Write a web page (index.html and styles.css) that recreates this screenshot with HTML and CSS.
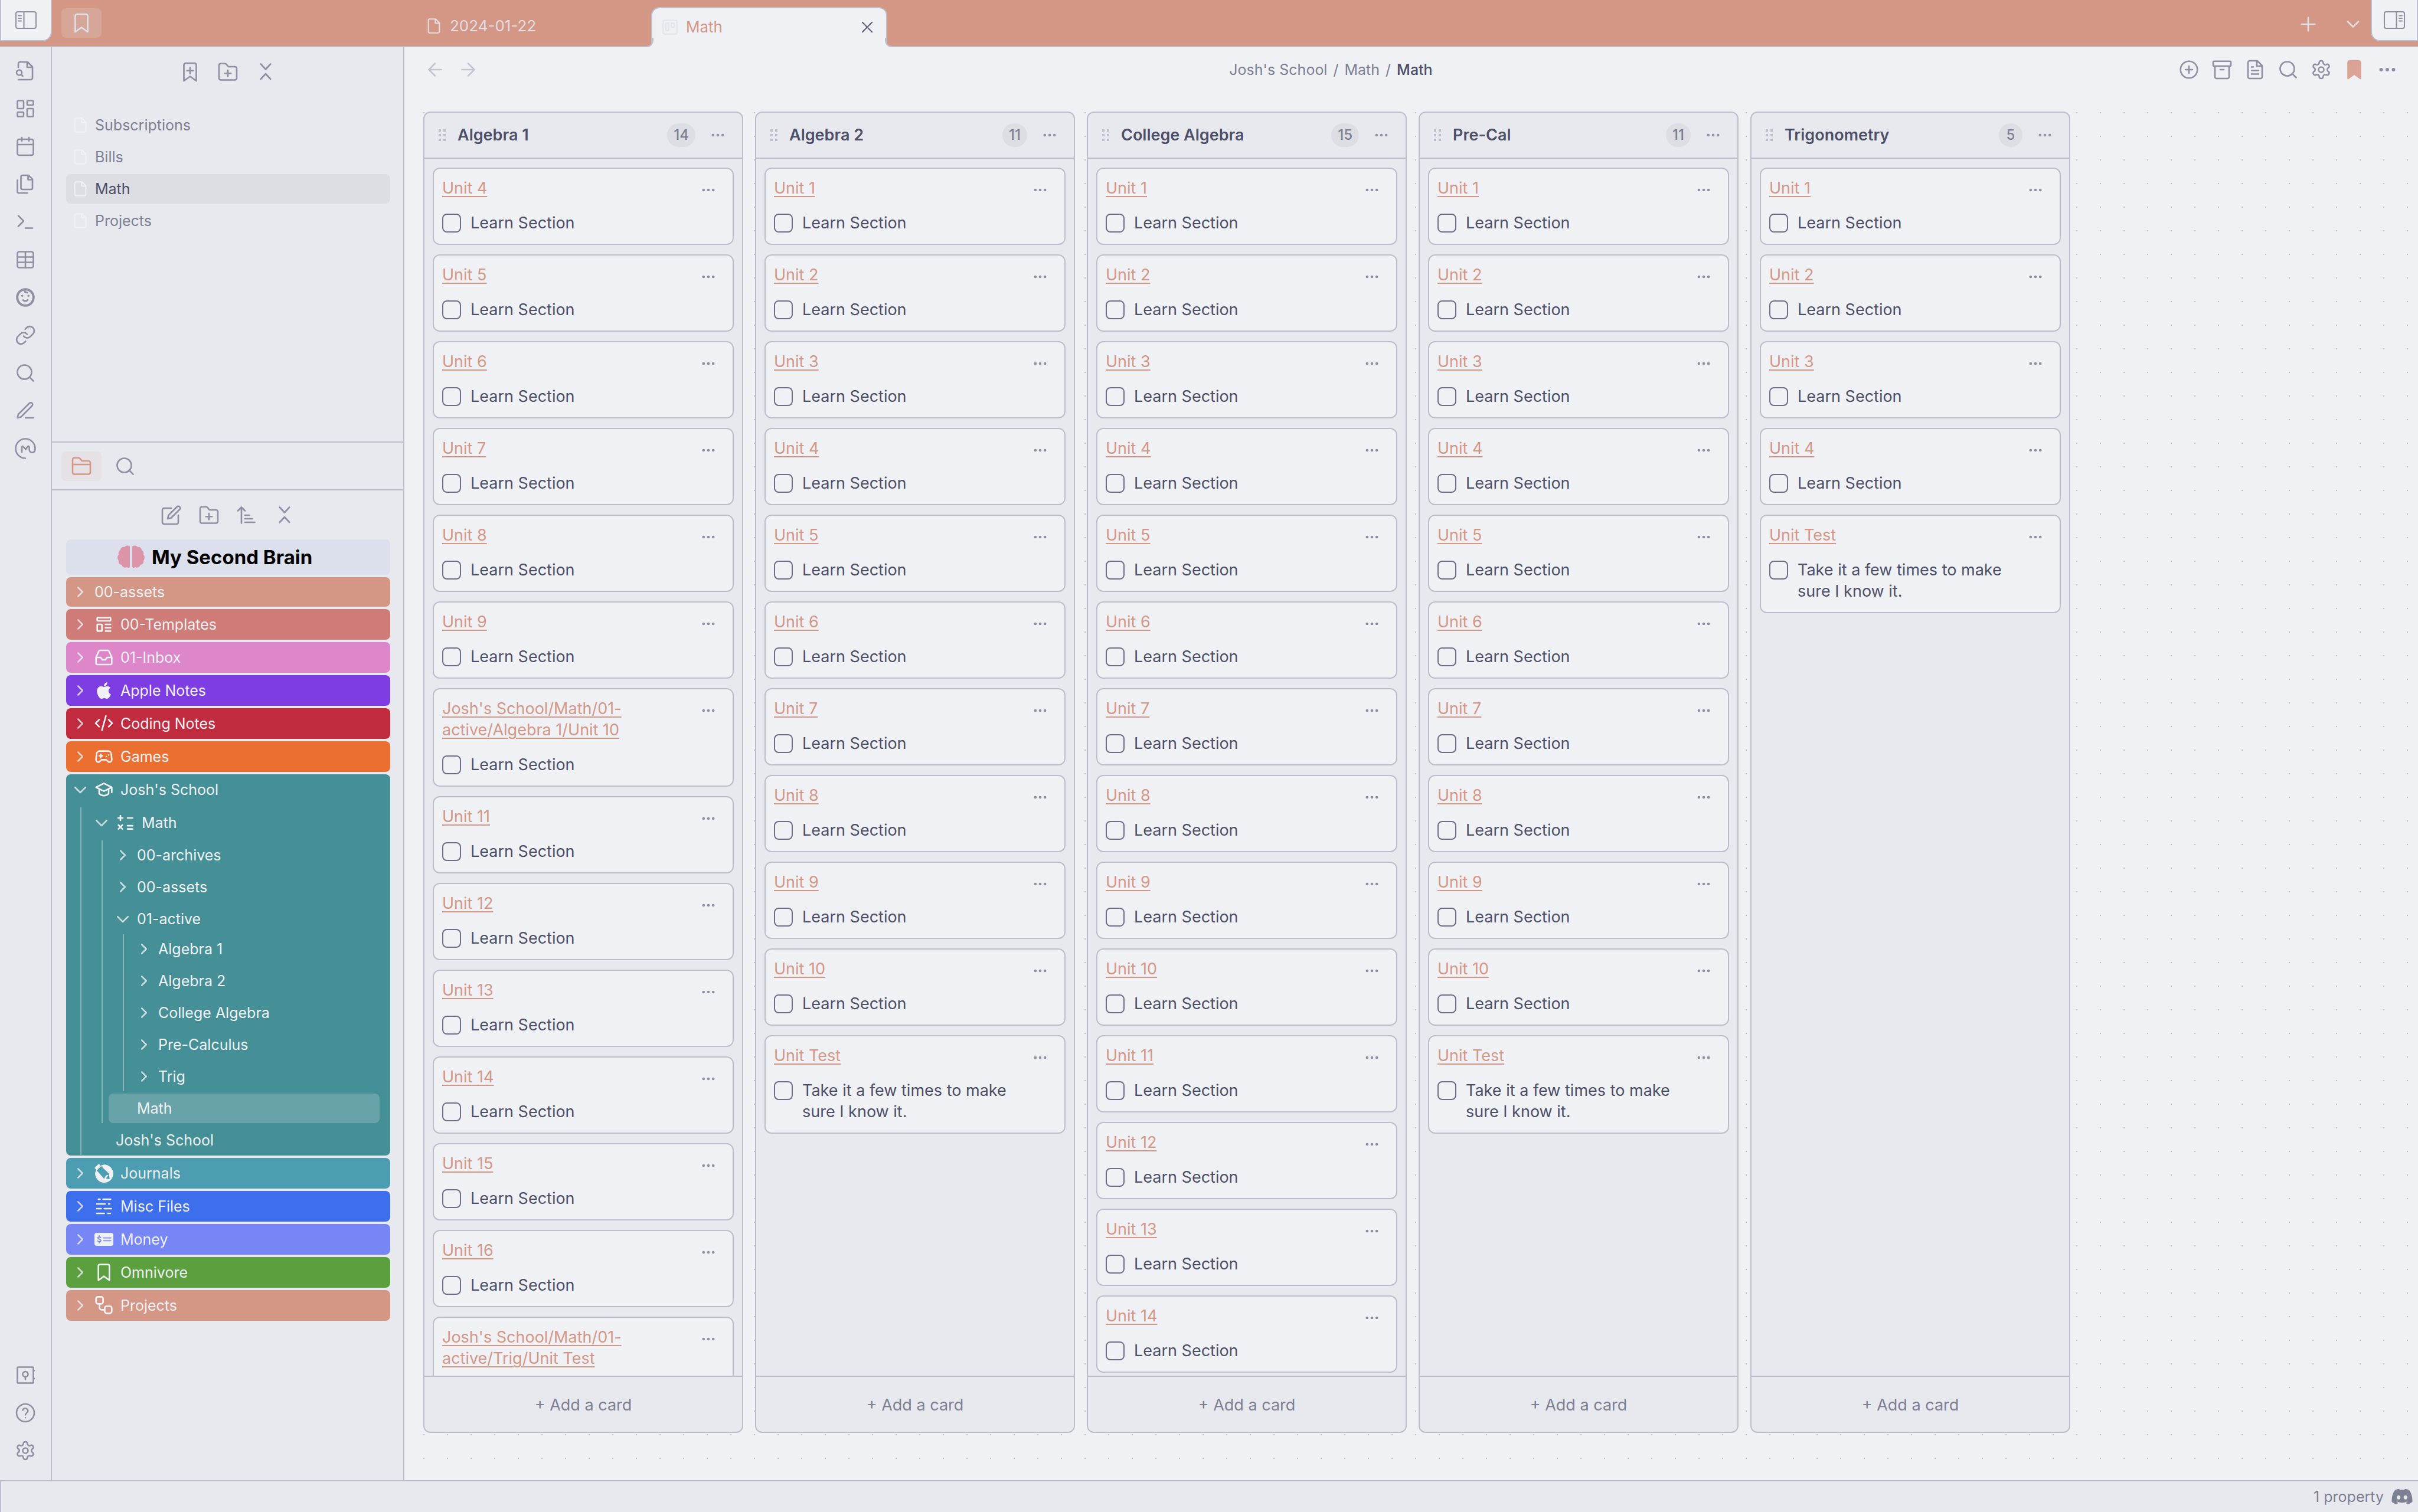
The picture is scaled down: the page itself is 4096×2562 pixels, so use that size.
FILE: index.html
```html
<!DOCTYPE html>
<html lang="en">
<head>
<meta charset="utf-8">
<title>Math</title>
<link rel="stylesheet" href="styles.css">
</head>
<body>
<svg class="sprite" aria-hidden="true">
  <symbol id="panel-left" viewBox="0 0 36 32"><rect x="1" y="2" width="34" height="28" rx="3"/><path d="M14.500 2v28M5 8.500h5M5 13h5M5 17.500h5"/></symbol>
  <symbol id="panel-right" viewBox="0 0 36 32"><rect x="1" y="2" width="34" height="28" rx="3"/><path d="M21.500 2v28M26 8.500h5M26 13h5M26 17.500h5"/></symbol>
  <symbol id="bookmark" viewBox="0 0 24 24"><path d="m19 22-7-5-7 5V4a2 2 0 0 1 2-2h10a2 2 0 0 1 2 2z"/></symbol>
  <symbol id="bookmark-plus" viewBox="0 0 24 24"><path d="m19 22-7-5-7 5V4a2 2 0 0 1 2-2h10a2 2 0 0 1 2 2zM12 7v7M15.500 10.500h-7"/></symbol>
  <symbol id="folder-plus" viewBox="0 0 24 24"><path d="M4 21h16a2 2 0 0 0 2-2V8a2 2 0 0 0-2-2h-7.500L10.300 3.300A2 2 0 0 0 8.700 2.500H4a2 2 0 0 0-2 2V19a2 2 0 0 0 2 2zM12 10v7M8.500 13.500h7"/></symbol>
  <symbol id="folder" viewBox="0 0 24 24"><path d="M4 21h16a2 2 0 0 0 2-2V8a2 2 0 0 0-2-2h-7.500L10.300 3.300A2 2 0 0 0 8.700 2.500H4a2 2 0 0 0-2 2V19a2 2 0 0 0 2 2zM2 10h20"/></symbol>
  <symbol id="collapse" viewBox="0 0 24 24"><path d="m6.500 20 5.500-6 5.500 6M6.500 3l5.500 6 5.500-6"/></symbol>
  <symbol id="sort" viewBox="0 0 24 24"><path d="m2 7 4-4 4 4M6 3v18M10 12h5M10 16h8M10 20h11"/></symbol>
  <symbol id="compose" viewBox="0 0 24 24"><path d="M12 4H4a2 2 0 0 0-2 2v14a2 2 0 0 0 2 2h14a2 2 0 0 0 2-2v-8M18.500 2.500a2.100 2.100 0 0 1 3 3L12 15l-4 1 1-4z"/></symbol>
  <symbol id="file" viewBox="0 0 24 24"><path d="M14.500 2H6a2 2 0 0 0-2 2v16a2 2 0 0 0 2 2h12a2 2 0 0 0 2-2V7.500zM14 2v6h6"/></symbol>
  <symbol id="file-text" viewBox="0 0 24 24"><path d="M14.500 2H6a2 2 0 0 0-2 2v16a2 2 0 0 0 2 2h12a2 2 0 0 0 2-2V7.500zM14 2v6h6M16 13H8M16 17H8M10 9H8"/></symbol>
  <symbol id="kanban" viewBox="0 0 24 24"><rect x="2" y="2" width="20" height="20" rx="2"/><rect x="6" y="6" width="4" height="11"/><rect x="14" y="6" width="4" height="6"/></symbol>
  <symbol id="file-search" viewBox="0 0 24 24"><path d="M4 8V4a2 2 0 0 1 2-2h8.500L20 7.500V20a2 2 0 0 1-2 2H4M14 2v6h6M7.500 16.500 9 18"/><circle cx="5" cy="14" r="3"/></symbol>
  <symbol id="dashboard" viewBox="0 0 24 24"><rect x="3" y="3" width="7" height="9" rx="1"/><rect x="14" y="3" width="7" height="5" rx="1"/><rect x="14" y="12" width="7" height="9" rx="1"/><rect x="3" y="16" width="7" height="5" rx="1"/></symbol>
  <symbol id="calendar" viewBox="0 0 24 24"><rect x="3" y="4" width="18" height="18" rx="2"/><path d="M16 2v4M8 2v4M3 10h18"/></symbol>
  <symbol id="files" viewBox="0 0 24 24"><path d="M15.500 2H8.600a1.600 1.600 0 0 0-1.600 1.600v12.800A1.600 1.600 0 0 0 8.600 18h9.800a1.600 1.600 0 0 0 1.600-1.600V6.500zM15 2v5h5M3 7.600v12.800A1.600 1.600 0 0 0 4.600 22h9.800"/></symbol>
  <symbol id="terminal" viewBox="0 0 24 24"><path d="m4 17 6-6-6-6M12 19h8"/></symbol>
  <symbol id="table" viewBox="0 0 24 24"><rect x="3" y="3" width="18" height="18" rx="2"/><path d="M12 3v18M3 9h18M3 15h18"/></symbol>
  <symbol id="baby" viewBox="0 0 24 24"><circle cx="12" cy="12" r="9.200" stroke-width="2.600"/><path d="M9.500 15c1.500 1.200 3.500 1.200 5 0" stroke-width="2"/><path d="M11 3.500c0 2 1 3 3 3" stroke-width="2"/><path d="M8.500 10.200h.01M15.500 10.200h.01" stroke-width="2.400"/></symbol>
  <symbol id="link" viewBox="0 0 24 24"><path d="M10 13a5 5 0 0 0 7.540.540l3-3a5 5 0 0 0-7.070-7.070l-1.720 1.710M14 11a5 5 0 0 0-7.540-.540l-3 3a5 5 0 0 0 7.070 7.070l1.710-1.710"/></symbol>
  <symbol id="search" viewBox="0 0 24 24"><circle cx="11" cy="11" r="8"/><path d="m21 21-4.300-4.300"/></symbol>
  <symbol id="pencil" viewBox="0 0 24 24"><path d="M12 20h9M16.500 3.500a2.120 2.120 0 0 1 3 3L7 19l-4 1 1-4z"/></symbol>
  <symbol id="m-circle" viewBox="0 0 24 24"><path d="M12 23A11 11 0 1 1 23 12c0 3-1.500 4.500-3.400 4.500S16.400 15 16.400 13v-2.500c0-1.100-1.100-1.400-1.800-.6L12.300 13 9.700 9.900C9 9 8 9.400 8 10.500V16"/></symbol>
  <symbol id="vault" viewBox="0 0 24 24"><rect x="3" y="3" width="18" height="18" rx="1"/><circle cx="12" cy="11" r="3"/><path d="M12 14v3M22 7v.01M22 16v.01"/></symbol>
  <symbol id="help" viewBox="0 0 24 24"><circle cx="12" cy="12" r="10"/><path d="M9 9a3 3 0 0 1 5.830 1c0 2-2.830 2.700-2.830 4.200M12 17.500h.01"/></symbol>
  <symbol id="gear" viewBox="0 0 24 24"><path d="M12.220 2h-.44a2 2 0 0 0-2 2v.18a2 2 0 0 1-1 1.730l-.43.25a2 2 0 0 1-2 0l-.15-.08a2 2 0 0 0-2.730.73l-.22.38a2 2 0 0 0 .73 2.730l.15.1a2 2 0 0 1 1 1.720v.51a2 2 0 0 1-1 1.740l-.15.09a2 2 0 0 0-.73 2.730l.22.38a2 2 0 0 0 2.730.73l.15-.08a2 2 0 0 1 2 0l.43.25a2 2 0 0 1 1 1.730V20a2 2 0 0 0 2 2h.44a2 2 0 0 0 2-2v-.18a2 2 0 0 1 1-1.730l.43-.25a2 2 0 0 1 2 0l.15.08a2 2 0 0 0 2.730-.73l.22-.39a2 2 0 0 0-.73-2.730l-.15-.08a2 2 0 0 1-1-1.740v-.5a2 2 0 0 1 1-1.740l.15-.09a2 2 0 0 0 .73-2.730l-.22-.38a2 2 0 0 0-2.730-.73l-.15.08a2 2 0 0 1-2 0l-.43-.25a2 2 0 0 1-1-1.730V4a2 2 0 0 0-2-2z"/><circle cx="12" cy="12" r="3"/></symbol>
  <symbol id="plus" viewBox="0 0 24 24"><path d="M12 4.500v15M4.500 12h15"/></symbol>
  <symbol id="chevron-down" viewBox="0 0 24 24"><path d="m6 9 6 6 6-6"/></symbol>
  <symbol id="close" viewBox="0 0 24 24"><path d="M5 5l14 14M19 5 5 19"/></symbol>
  <symbol id="arrow-left" viewBox="0 0 24 24"><path d="m12 19-7-7 7-7M19 12H5"/></symbol>
  <symbol id="arrow-right" viewBox="0 0 24 24"><path d="m12 5 7 7-7 7M5 12h14"/></symbol>
  <symbol id="plus-circle" viewBox="0 0 24 24"><circle cx="12" cy="12" r="9.500"/><path d="M12 8v8M8 12h8"/></symbol>
  <symbol id="archive" viewBox="0 0 24 24"><rect x="2" y="2.500" width="20" height="5.500" rx="1"/><path d="M4 8v12a2 2 0 0 0 2 2h12a2 2 0 0 0 2-2V8M10 12h4"/></symbol>
  <symbol id="more" viewBox="0 0 24 24"><path d="M5 12h.01M12 12h.01M19 12h.01" stroke-width="4"/></symbol>
  <symbol id="fold" viewBox="4 4 16 16"><path d="m9 18 6-6-6-6"/></symbol>
  <symbol id="unfold" viewBox="4 4 16 16"><path d="m5 9 7 7 7-7"/></symbol>
  <symbol id="template" viewBox="0 0 24 24"><rect x="3.500" y="3.500" width="17" height="4" rx=".5"/><rect x="3.500" y="12" width="6" height="8.500" rx=".5"/><path d="M14 12h6.500M14 16.200h6.500M14 20.500h6.500"/></symbol>
  <symbol id="inbox" viewBox="0 0 24 24"><path d="M22 12h-6l-2 3h-4l-2-3H2M5.450 4.110 2 12v7a2 2 0 0 0 2 2h16a2 2 0 0 0 2-2v-7l-3.450-7.890A2 2 0 0 0 16.760 3H7.240a2 2 0 0 0-1.790 1.110z"/></symbol>
  <symbol id="apple" viewBox="-64 0 512 512"><path class="solid" d="M318.700 268.700c-.2-36.700 16.400-64.400 50-84.800-18.800-26.900-47.200-41.700-84.700-44.600-35.500-2.800-74.300 20.700-88.500 20.700-15 0-49.400-19.700-76.400-19.700C63.300 141.200 4 184.800 4 273.500q0 39.300 14.400 81.200c12.800 36.700 59 126.700 107.200 125.200 25.200-.6 43-17.900 75.800-17.900 31.800 0 48.300 17.900 76.400 17.900 48.600-.7 90.400-82.500 102.600-119.300-65.200-30.700-61.700-90-61.700-91.900zm-56.600-164.200c27.300-32.400 24.800-61.900 24-72.500-24.100 1.400-52 16.400-67.900 34.900-17.500 19.800-27.800 44.300-25.600 71.900 26.100 2 49.900-11.400 69.500-34.300z"/></symbol>
  <symbol id="code" viewBox="0 0 24 24"><path d="m18 16 4.500-4.500L18 7M6 7l-4.500 4.500L6 16M14.500 2.500l-5 18"/></symbol>
  <symbol id="gamepad" viewBox="0 0 24 24"><path d="M6 11h4M8 9v4M15 12h.01M18 10h.01M17.320 5H6.680a4 4 0 0 0-3.980 3.590C2.600 9.420 2 14.460 2 16a3 3 0 0 0 3 3c1 0 1.500-.5 2-1l1.410-1.410A2 2 0 0 1 9.830 16h4.340a2 2 0 0 1 1.410.590L17 18c.5.5 1 1 2 1a3 3 0 0 0 3-3c0-1.540-.6-6.580-.68-7.260A4 4 0 0 0 17.320 5z"/></symbol>
  <symbol id="school" viewBox="0 0 24 24"><path d="M22 9 12 4 2 9l10 5zV15.500M6 11.500V17c3 3.500 9 3.500 12 0v-5.500"/></symbol>
  <symbol id="math" viewBox="0 0 24 24"><path d="M3 6h6M6 3v6M15 6h6.500M3.500 15l5 5M8.500 15l-5 5M15 15.800h6.500M15 20h6.500"/></symbol>
  <symbol id="journal" viewBox="0 0 96 96"><path class="solid" d="M49 4a46 46 0 1 1-45 40L7 34 34 8z"/><path class="cut" d="M12 34 34 12l40 38 3 27-29-2z"/><path class="solid" d="M0 21 22 0l9 9-20 22zM50 78c1-10 7-20 16-22l6 4c-8 3-12 9-12 17z"/><path class="cut" d="m72 64 4 12-13-1z"/></symbol>
  <symbol id="logs" viewBox="0 0 24 24"><path d="M5 3h2M11 3h9.500M3 9h10.500M18 9h1.500M3 15h5.500M12.500 15h9M3 21h9.500M17 21h3" /></symbol>
  <symbol id="money" viewBox="0 0 96 66"><rect class="solid" width="96" height="66" rx="12"/><path class="dollar" d="M32 24c-3-4-15-4-15 2 0 8 16 5 16 13 0 7-12 7-17 2M24 14v6M24 45v6M46 26h38M46 40h38"/></symbol>
  <symbol id="workflow" viewBox="0 0 24 24"><rect x="2" y="1" width="9" height="9" rx="2.500"/><rect x="13" y="13" width="9" height="9" rx="2.500"/><path d="M6.500 10v5a2.500 2.500 0 0 0 2.500 2.500h4"/></symbol>
  <symbol id="brain" viewBox="0 0 46 40"><path class="solid" d="M21 2c-4-3-8-1-9 1-4-1-7 2-7 5-3 2-4 5-3 8-3 3-2 8 0 10-1 4 2 7 5 7 1 4 6 6 9 4 2 2 5 1 5-1zM25 2c4-3 8-1 9 1 4-1 7 2 7 5 3 2 4 5 3 8 3 3 2 8 0 10 1 4-2 7-5 7-1 4-6 6-9 4-2 2-5 1-5-1z"/></symbol>
  <symbol id="discord" viewBox="0 0 640 512"><path class="solid" d="M524.531,69.836a1.500,1.500,0,0,0-.764-.7A485.065,485.065,0,0,0,404.081,32.030a1.816,1.816,0,0,0-1.923.91,337.461,337.461,0,0,0-14.900,30.600,447.848,447.848,0,0,0-134.426,0,309.541,309.541,0,0,0-15.135-30.600,1.890,1.890,0,0,0-1.924-.91A483.689,483.689,0,0,0,116.085,69.137a1.712,1.712,0,0,0-.788.676C39.068,183.651,18.186,294.690,28.430,404.354a2.016,2.016,0,0,0,.765,1.375A487.666,487.666,0,0,0,176.020,479.918a1.900,1.900,0,0,0,2.063-.676A348.200,348.200,0,0,0,208.120,430.400a1.860,1.860,0,0,0-1.019-2.588,321.173,321.173,0,0,1-45.868-21.853,1.885,1.885,0,0,1-.185-3.126c3.082-2.309,6.166-4.711,9.109-7.137a1.819,1.819,0,0,1,1.900-.256c96.229,43.917,200.410,43.917,295.500,0a1.812,1.812,0,0,1,1.924.233c2.944,2.426,6.027,4.851,9.132,7.160a1.884,1.884,0,0,1-.162,3.126,301.407,301.407,0,0,1-45.890,21.830,1.875,1.875,0,0,0-1,2.611,391.055,391.055,0,0,0,30.014,48.815,1.864,1.864,0,0,0,2.063.7A486.048,486.048,0,0,0,610.700,405.729a1.882,1.882,0,0,0,.765-1.352C623.729,277.594,590.933,167.465,524.531,69.836ZM222.491,337.580c-28.972,0-52.844-26.587-52.844-59.239S193.056,219.100,222.491,219.100c29.665,0,53.306,26.820,52.843,59.239C275.334,310.993,251.924,337.580,222.491,337.580Zm195.380,0c-28.971,0-52.843-26.587-52.843-59.239S388.437,219.100,417.871,219.100c29.667,0,53.307,26.820,52.844,59.239C470.715,310.993,447.538,337.580,417.871,337.580Z"/></symbol>
</svg>

<div class="app">
  <header class="titlebar">
    <button class="toggle toggle-left" aria-label="Collapse left sidebar"><svg><use href="#panel-left"/></svg></button>
    <div class="titlebar-side">
      <button class="pane-tab on-accent" aria-label="Bookmarks"><svg class="icon"><use href="#bookmark"/></svg></button>
    </div>
    <nav class="tabs">
      <a class="tab" href="#"><svg class="icon small"><use href="#file"/></svg><span>2024-01-22</span></a>
      <div class="tab active"><svg class="icon small"><use href="#kanban"/></svg><a href="#">Math</a><button aria-label="Close"><svg class="icon small"><use href="#close"/></svg></button></div>
    </nav>
    <div class="titlebar-actions">
      <button aria-label="New tab"><svg class="icon"><use href="#plus"/></svg></button>
      <button aria-label="Tab list"><svg class="icon"><use href="#chevron-down"/></svg></button>
    </div>
    <button class="toggle toggle-right" aria-label="Expand right sidebar"><svg><use href="#panel-right"/></svg></button>
  </header>

  <div class="workspace">
    <nav class="ribbon">
      <button aria-label="Quick switcher"><svg class="icon"><use href="#file-search"/></svg></button>
      <button aria-label="Canvas"><svg class="icon"><use href="#dashboard"/></svg></button>
      <button aria-label="Daily note"><svg class="icon"><use href="#calendar"/></svg></button>
      <button aria-label="Templates"><svg class="icon"><use href="#files"/></svg></button>
      <button aria-label="Command palette"><svg class="icon"><use href="#terminal"/></svg></button>
      <button aria-label="Table"><svg class="icon"><use href="#table"/></svg></button>
      <button aria-label="Baby"><svg class="icon"><use href="#baby"/></svg></button>
      <button aria-label="Links"><svg class="icon"><use href="#link"/></svg></button>
      <button aria-label="Search"><svg class="icon"><use href="#search"/></svg></button>
      <button aria-label="Edit"><svg class="icon"><use href="#pencil"/></svg></button>
      <button aria-label="Sync"><svg class="icon"><use href="#m-circle"/></svg></button>
      <div class="ribbon-bottom">
        <button aria-label="Open another vault"><svg class="icon"><use href="#vault"/></svg></button>
        <button aria-label="Help"><svg class="icon"><use href="#help"/></svg></button>
        <button aria-label="Settings"><svg class="icon"><use href="#gear"/></svg></button>
      </div>
    </nav>

    <aside class="sidebar">
      <section class="pane bookmarks">
        <div class="pane-actions">
          <button aria-label="Bookmark active tab"><svg class="icon"><use href="#bookmark-plus"/></svg></button>
          <button aria-label="New group"><svg class="icon"><use href="#folder-plus"/></svg></button>
          <button aria-label="Collapse all"><svg class="icon"><use href="#collapse"/></svg></button>
        </div>
        <ul class="bookmark-list">
          <li><a href="#"><svg class="icon small"><use href="#file"/></svg>Subscriptions</a></li>
          <li><a href="#"><svg class="icon small"><use href="#file"/></svg>Bills</a></li>
          <li><a class="selected" href="#"><svg class="icon small"><use href="#file"/></svg>Math</a></li>
          <li><a href="#"><svg class="icon small"><use href="#file"/></svg>Projects</a></li>
        </ul>
      </section>
      <section class="pane explorer">
        <div class="pane-tabs">
          <button class="pane-tab current" aria-label="Files"><svg class="icon"><use href="#folder"/></svg></button>
          <button class="pane-tab" aria-label="Search"><svg class="icon"><use href="#search"/></svg></button>
        </div>
        <div class="pane-actions">
          <button aria-label="New note"><svg class="icon"><use href="#compose"/></svg></button>
          <button aria-label="New folder"><svg class="icon"><use href="#folder-plus"/></svg></button>
          <button aria-label="Sort order"><svg class="icon"><use href="#sort"/></svg></button>
          <button aria-label="Collapse all"><svg class="icon"><use href="#collapse"/></svg></button>
        </div>
        <div class="tree">
          <h2 class="vault-name"><svg class="brain"><use href="#brain"/></svg>My Second Brain</h2>
          <a class="row folder plain rosewater" href="#"><svg class="fold"><use href="#fold"/></svg>00-assets</a>
          <a class="row folder flamingo" href="#"><svg class="fold"><use href="#fold"/></svg><svg class="row-icon"><use href="#template"/></svg>00-Templates</a>
          <a class="row folder pink" href="#"><svg class="fold"><use href="#fold"/></svg><svg class="row-icon"><use href="#inbox"/></svg>01-Inbox</a>
          <a class="row folder mauve" href="#"><svg class="fold"><use href="#fold"/></svg><svg class="row-icon"><use href="#apple"/></svg>Apple Notes</a>
          <a class="row folder red" href="#"><svg class="fold"><use href="#fold"/></svg><svg class="row-icon"><use href="#code"/></svg>Coding Notes</a>
          <a class="row folder peach" href="#"><svg class="fold"><use href="#fold"/></svg><svg class="row-icon"><use href="#gamepad"/></svg>Games</a>
          <div class="open-folder teal">
            <a class="row folder" href="#"><svg class="fold"><use href="#unfold"/></svg><svg class="row-icon"><use href="#school"/></svg>Josh's School</a>
            <div class="children">
              <a class="row folder" href="#"><svg class="fold"><use href="#unfold"/></svg><svg class="row-icon"><use href="#math"/></svg>Math</a>
              <div class="children">
                <a class="row" href="#"><svg class="fold"><use href="#fold"/></svg>00-archives</a>
                <a class="row" href="#"><svg class="fold"><use href="#fold"/></svg>00-assets</a>
                <a class="row" href="#"><svg class="fold"><use href="#unfold"/></svg>01-active</a>
                <div class="children compact">
                  <a class="row" href="#"><svg class="fold"><use href="#fold"/></svg>Algebra 1</a>
                  <a class="row" href="#"><svg class="fold"><use href="#fold"/></svg>Algebra 2</a>
                  <a class="row" href="#"><svg class="fold"><use href="#fold"/></svg>College Algebra</a>
                  <a class="row" href="#"><svg class="fold"><use href="#fold"/></svg>Pre-Calculus</a>
                  <a class="row" href="#"><svg class="fold"><use href="#fold"/></svg>Trig</a>
                </div>
                <a class="row note selected" href="#">Math</a>
              </div>
              <a class="row note" href="#">Josh's School</a>
            </div>
          </div>
          <a class="row folder sapphire" href="#"><svg class="fold"><use href="#fold"/></svg><svg class="row-icon"><use href="#journal"/></svg>Journals</a>
          <a class="row folder blue" href="#"><svg class="fold"><use href="#fold"/></svg><svg class="row-icon"><use href="#logs"/></svg>Misc Files</a>
          <a class="row folder lavender" href="#"><svg class="fold"><use href="#fold"/></svg><svg class="row-icon"><use href="#money"/></svg>Money</a>
          <a class="row folder green" href="#"><svg class="fold"><use href="#fold"/></svg><svg class="row-icon"><use href="#bookmark"/></svg>Omnivore</a>
          <a class="row folder rosewater" href="#"><svg class="fold"><use href="#fold"/></svg><svg class="row-icon"><use href="#workflow"/></svg>Projects</a>
        </div>
      </section>
    </aside>

    <main class="view">
      <div class="view-header">
        <div class="view-actions history">
          <button aria-label="Back"><svg class="icon"><use href="#arrow-left"/></svg></button>
          <button aria-label="Forward"><svg class="icon"><use href="#arrow-right"/></svg></button>
        </div>
        <div class="breadcrumbs"><a href="#">Josh's School</a><span>/</span><a href="#">Math</a><span>/</span><strong>Math</strong></div>
        <div class="view-actions">
          <button aria-label="Add a list"><svg class="icon"><use href="#plus-circle"/></svg></button>
          <button aria-label="Archive completed cards"><svg class="icon"><use href="#archive"/></svg></button>
          <button aria-label="Open as markdown"><svg class="icon"><use href="#file-text"/></svg></button>
          <button aria-label="Search"><svg class="icon"><use href="#search"/></svg></button>
          <button aria-label="Board settings"><svg class="icon"><use href="#gear"/></svg></button>
          <button class="bookmarked" aria-label="Bookmark"><svg class="icon"><use href="#bookmark"/></svg></button>
          <button aria-label="More options"><svg class="icon"><use href="#more"/></svg></button>
        </div>
      </div>
      <div class="board" id="board"></div>
    </main>
  </div>

  <footer class="statusbar"><span>1 property</span><svg><use href="#discord"/></svg></footer>
</div>
<script src="board.js"></script>
</body>
</html>
```
FILE: board.js
```js
const learn = 'Learn Section';
const finalTask = 'Take it a few times to make sure I know it.';
const units = (from, to) =>
  Array.from({ length: to - from + 1 }, (_, i) => [`Unit ${from + i}`, learn]);

const lanes = [
  {
    title: 'Algebra 1',
    total: 14,
    cards: [
      ...units(4, 9),
      ["Josh's School/Math/01-active/Algebra 1/Unit 10", learn],
      ...units(11, 16),
      ["Josh's School/Math/01-active/Trig/Unit Test", ''],
    ],
  },
  { title: 'Algebra 2', total: 11, cards: [...units(1, 10), ['Unit Test', finalTask]] },
  { title: 'College Algebra', total: 15, cards: units(1, 14) },
  { title: 'Pre-Cal', total: 11, cards: [...units(1, 10), ['Unit Test', finalTask]] },
  { title: 'Trigonometry', total: 5, cards: [...units(1, 4), ['Unit Test', finalTask]] },
];

const more = '<svg class="icon"><use href="#more"/></svg>';

const taskHtml = (task) =>
  task ? `<label class="task"><input type="checkbox"><span>${task}</span></label>` : '';

const cardHtml = ([title, task]) => `
  <article class="card">
    <div class="card-head">
      <a href="#">${title}</a>
      <button aria-label="Card options">${more}</button>
    </div>
    ${taskHtml(task)}
  </article>`;

document.getElementById('board').innerHTML = lanes.map(({ title, total, cards }) => `
  <section class="lane">
    <header class="lane-head">
      <span class="grip"><i></i><i></i><i></i><i></i><i></i><i></i></span>
      <h3>${title}</h3>
      <span class="count">${total}</span>
      <button aria-label="List options">${more}</button>
    </header>
    <div class="cards">${cards.map(cardHtml).join('')}</div>
    <button class="add-card">+ Add a card</button>
  </section>`).join('');
```
FILE: styles.css
```css
:root {
  --base: #eff1f5;
  --mantle: #e7e9ee;
  --line: #bcbecb;
  --shade: #dcdee3;
  --text: #4c4f67;
  --muted: #7d7f92;
  --icon: #8e90a1;
  --accent: #d49786;
}

* { box-sizing: border-box; }

html, body { height: 100%; }

body {
  margin: 0;
  background: var(--base);
  color: var(--text);
  font: 25px/36px Inter, "Liberation Sans", sans-serif;
}

button {
  display: flex;
  align-items: center;
  justify-content: center;
  margin: 0;
  padding: 0;
  border: 0;
  background: none;
  color: inherit;
  font: inherit;
}

a { color: inherit; text-decoration: none; }
h2, h3, ul { margin: 0; padding: 0; }
ul { list-style: none; }

svg {
  flex: none;
  fill: none;
  stroke: currentColor;
  stroke-width: 2;
  stroke-linecap: round;
  stroke-linejoin: round;
}

.sprite { position: absolute; width: 0; height: 0; }
.solid { fill: currentColor; stroke: none; }
.icon { width: 36px; height: 36px; stroke-width: 1.75; }
.icon.small { width: 28px; height: 28px; }

.app { display: flex; flex-direction: column; height: 100%; }

/* Title bar */
.titlebar {
  display: flex;
  flex: none;
  height: 80px;
  border-bottom: 2px solid var(--line);
  background: var(--accent);
}

.toggle {
  width: 88px;
  height: 70px;
  border: 2px solid var(--line);
  border-top: 0;
  background: var(--base);
  color: var(--icon);
}
.toggle svg { width: 36px; height: 32px; }
.toggle-left { border-bottom-right-radius: 16px; }
.toggle-right { width: 80px; border-bottom-left-radius: 16px; }

.titlebar-side { width: 597px; padding: 14px 16px; }

.pane-tab {
  width: 68px;
  height: 50px;
  border-radius: 8px;
  color: var(--icon);
}
.pane-tab.on-accent { background: #d6a699; color: #dfe1e8; }
.pane-tab.current { background: #e5e1e5; color: var(--accent); }

.tabs { display: flex; flex: 1; align-items: flex-end; padding-left: 18px; }

.tab {
  display: flex;
  align-items: center;
  gap: 13px;
  width: 400px;
  height: 68px;
  padding-left: 18px;
  color: #e0dee3;
  font-size: 26px;
}

.tab.active {
  position: relative;
  margin-bottom: -2px;
  padding: 0 18px 2px 16px;
  border: 2px solid var(--line);
  border-bottom: 0;
  border-radius: 14px 14px 0 0;
  background: var(--base);
  color: var(--accent);
}
.tab.active > svg { color: #e2e4eb; }
.tab.active button { margin-left: auto; color: #5c5f77; }

.tab.active::before,
.tab.active::after {
  content: "";
  position: absolute;
  bottom: 0;
  width: 14px;
  height: 14px;
  border-bottom: 2px solid var(--line);
}
.tab.active::before {
  left: -14px;
  border-right: 2px solid var(--line);
  border-bottom-right-radius: 12px;
  box-shadow: 4px 4px 0 var(--base);
}
.tab.active::after {
  right: -14px;
  border-left: 2px solid var(--line);
  border-bottom-left-radius: 12px;
  box-shadow: -4px 4px 0 var(--base);
}

.titlebar-actions {
  display: flex;
  gap: 40px;
  padding: 4px 12px 0 0;
  color: #e0dee3;
}

/* Workspace */
.workspace { display: flex; flex: 1; min-height: 0; }

.ribbon {
  display: flex;
  flex: none;
  flex-direction: column;
  align-items: center;
  gap: 28px;
  width: 88px;
  padding: 22px 0 32px;
  border-right: 2px solid var(--line);
  background: var(--mantle);
  color: var(--icon);
}
.ribbon-bottom { display: flex; flex-direction: column; gap: 28px; margin-top: auto; }

.sidebar {
  display: flex;
  flex: none;
  flex-direction: column;
  width: 597px;
  border-right: 2px solid var(--line);
  background: var(--mantle);
}

.pane { min-height: 0; overflow: hidden; }
.bookmarks { flex: 669 1 0; border-bottom: 2px solid var(--line); }
.explorer { flex: 1759 1 0; }

.pane-tabs {
  display: flex;
  gap: 6px;
  padding: 15px 16px 14px;
  border-bottom: 2px solid var(--line);
}

.pane-actions {
  display: flex;
  align-items: center;
  justify-content: center;
  gap: 28px;
  height: 83px;
  color: var(--icon);
}

.bookmark-list {
  display: grid;
  gap: 4px;
  padding: 24px 22px 0 24px;
  color: var(--muted);
}
.bookmark-list a {
  display: flex;
  align-items: center;
  gap: 11px;
  height: 50px;
  padding-left: 10px;
  border-radius: 8px;
}
.bookmark-list svg { color: var(--base); }
.bookmark-list .selected { background: var(--shade); color: var(--text); }

.tree {
  display: flex;
  flex-direction: column;
  gap: 4px;
  padding: 0 22px 0 24px;
  color: var(--base);
}

.vault-name {
  display: flex;
  align-items: center;
  height: 60px;
  padding-left: 87px;
  border-radius: 8px;
  background: #dce0ec;
  color: #000;
  font-size: 33px;
  font-weight: 700;
}
.brain { width: 46px; height: 42px; margin-right: 12px; color: #db94a8; }

.row {
  display: flex;
  align-items: center;
  height: 50px;
  padding-left: 14px;
  border-radius: 8px;
}
.row.folder { height: 52px; }
.row.plain { height: 50px; }
.row.note { padding-left: 48px; }
.row.selected { background: #68a3aa; }
.fold { width: 20px; height: 20px; margin-right: 14px; opacity: .8; }
.row-icon { width: 32px; height: 32px; margin-right: 12px; }

.open-folder { padding: 0 18px 1px 0; border-radius: 8px; }
.children {
  display: flex;
  flex-direction: column;
  gap: 4px;
  margin: 4px 0 0 24px;
  padding-left: 10px;
  border-left: 2px solid #ffffff59;
}
.children .children { margin-top: 0; }
.children .compact { margin-top: -3px; }

.rosewater { background: #d49786; }
.flamingo { background: #cf7b78; }
.pink { background: #dd87ca; }
.mauve { background: #7d3de3; }
.red { background: #c02b3d; }
.peach { background: #ec6f32; }
.teal { background: #449096; }
.sapphire { background: #4c9cb2; }
.blue { background: #3d6eec; }
.lavender { background: #7786f5; }
.green { background: #5b9f3e; }

.cut { fill: #4c9cb2; stroke: none; }
.dollar { stroke: #7786f5; stroke-width: 5; }

/* View */
.view { display: flex; flex: 1; flex-direction: column; min-width: 0; }

.view-header {
  display: flex;
  flex: none;
  align-items: center;
  height: 76px;
  padding: 0 32px;
}
.view-actions { display: flex; gap: 16px; color: var(--icon); }
.view-actions button { width: 40px; height: 40px; }
.history { color: #c3c5d0; }
.bookmarked { color: #daa396; }
.bookmarked svg { fill: currentColor; }

.breadcrumbs {
  display: flex;
  flex: 1;
  justify-content: center;
  gap: 10px;
  padding-left: 8px;
  color: var(--muted);
}
.breadcrumbs strong { color: var(--text); font-weight: 500; }

.board {
  display: flex;
  flex: 1;
  gap: 20px;
  min-height: 0;
  margin: 33px 0 0 32px;
  padding-bottom: 80px;
  background-image: radial-gradient(circle at 1px 2px, var(--line) 1px, transparent 1px);
  background-size: 40px 40px;
}

.lane {
  display: flex;
  flex: none;
  flex-direction: column;
  width: 542px;
  border: 2px solid var(--line);
  border-radius: 12px;
  background: var(--mantle);
}

.lane-head {
  display: flex;
  flex: none;
  align-items: center;
  height: 78px;
  padding: 0 27px 0 24px;
  border-bottom: 2px solid var(--line);
}
.lane-head h3 {
  flex: 1;
  padding-left: 20px;
  font-size: 27px;
  font-weight: 600;
}
.lane-head .icon, .card-head .icon { width: 28px; height: 28px; color: var(--icon); }

.grip { display: grid; grid-template-columns: 4px 4px; gap: 4px; }
.grip i { height: 4px; background: var(--line); }

.count {
  min-width: 40px;
  margin-right: 24px;
  padding: 2px 11px;
  border-radius: 20px;
  background: var(--shade);
  color: var(--muted);
  font-size: 24px;
  font-weight: 500;
  text-align: center;
}

.cards {
  display: flex;
  flex: 1;
  flex-direction: column;
  gap: 16px;
  min-height: 0;
  padding: 15px 14px 0;
  overflow: hidden;
}

.card {
  flex: none;
  padding: 15px 14px 17px;
  border: 2px solid var(--line);
  border-radius: 12px;
  background: var(--base);
  font-size: 27px;
}

.card-head {
  display: flex;
  align-items: flex-start;
  justify-content: space-between;
  margin-bottom: 23px;
}
.card-head a {
  max-width: 380px;
  color: var(--accent);
  text-decoration: underline;
  text-decoration-thickness: 2px;
  text-underline-offset: 4px;
}
.card-head button { width: 54px; height: 36px; padding-top: 6px; }

.task { display: flex; gap: 16px; padding-right: 60px; }
.task input {
  flex: none;
  appearance: none;
  width: 32px;
  height: 32px;
  margin: 2px 0 0;
  border: 2px solid #6c6f85;
  border-radius: 8px;
}

.add-card {
  flex: none;
  height: 95px;
  padding-top: 2px;
  border-top: 2px solid var(--line);
  color: var(--muted);
  font-size: 27px;
}

/* Status bar */
.statusbar {
  display: flex;
  flex: none;
  align-items: center;
  justify-content: flex-end;
  gap: 12px;
  height: 54px;
  padding-right: 8px;
  border: 2px solid var(--line);
  border-width: 2px 0 0 2px;
  background: var(--mantle);
  color: var(--muted);
}
.statusbar svg { width: 38px; height: 32px; }
```
